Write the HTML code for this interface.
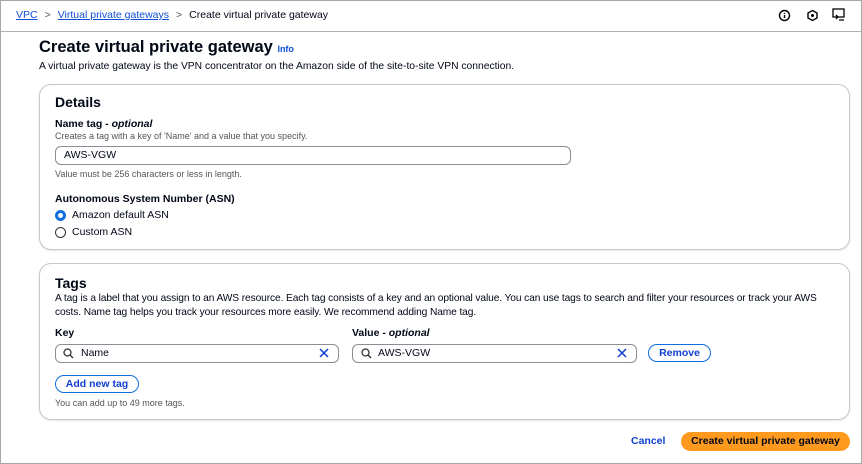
<!DOCTYPE html>
<html><head><style>
*{box-sizing:border-box;margin:0;padding:0}
body{width:862px;height:464px;background:#fff;font-family:"Liberation Sans",sans-serif;color:#000716;position:relative;overflow:hidden}
.frame{position:absolute;left:0;top:0;width:862px;height:464px;border:1px solid #a8a8a8}
.a{position:absolute;white-space:nowrap}
.hdr{position:absolute;left:0;top:0;width:862px;height:32px;border-bottom:1px solid #b0b0b0}
.lnk{color:#0f4fd6;text-decoration:underline}
.panel{position:absolute;left:39px;width:811px;border:1px solid #c6c6cd;border-radius:12px;box-shadow:0 1px 2px rgba(0,0,0,.1)}
.inp{position:absolute;height:19px;border:1px solid #8c8c94;border-radius:6px}
.s{font-size:9px;color:#555}
.b{font-weight:bold}
.btn{position:absolute;height:18px;border:1px solid #0f6ee0;border-radius:10px;color:#0f3fd0;font-weight:bold;font-size:10.5px;text-align:center;line-height:16px}
</style></head><body>
<div class="hdr"></div>
<div class="a" style="left:16px;top:9px;font-size:10.5px"><span class="lnk">VPC</span><span style="color:#555;margin:0 7px">&gt;</span><span class="lnk">Virtual private gateways</span><span style="color:#555;margin:0 7px">&gt;</span>Create virtual private gateway</div>
<svg class="a" style="left:778px;top:9px" width="13" height="13" viewBox="0 0 13 13"><circle cx="6.5" cy="6.5" r="5" fill="none" stroke="#000" stroke-width="1.4"/><path d="M6.5 4v1M6.5 6v3" stroke="#000" stroke-width="1.4"/></svg>
<svg class="a" style="left:806px;top:9px" width="13" height="13" viewBox="0 0 13 13"><path d="M6.5 1.5l4.5 2.5v5l-4.5 2.5-4.5-2.5v-5z" fill="none" stroke="#000" stroke-width="1.4"/><circle cx="6.5" cy="6.5" r="1.5" fill="#000"/></svg>
<svg class="a" style="left:832px;top:8px" width="14" height="14" viewBox="0 0 14 14"><rect x="1" y="1" width="11" height="8" fill="none" stroke="#000" stroke-width="1.3"/><path d="M4 7l2 2-2 2M7 12h5" fill="none" stroke="#000" stroke-width="1.3"/></svg>

<div class="a b" style="left:39px;top:38px;font-size:16.5px">Create virtual private gateway <span style="font-size:9px;color:#0f4fd6">Info</span></div>
<div class="a" style="left:39px;top:61px;font-size:10.3px">A virtual private gateway is the VPN concentrator on the Amazon side of the site-to-site VPN connection.</div>

<div class="panel" style="top:84px;height:166px"></div>
<div class="a b" style="left:55px;top:94px;font-size:14px">Details</div>
<div class="a b" style="left:55px;top:118px;font-size:10.5px">Name tag - <i>optional</i></div>
<div class="a s" style="left:55px;top:131px">Creates a tag with a key of 'Name' and a value that you specify.</div>
<div class="inp" style="left:55px;top:146px;width:516px"></div>
<div class="a" style="left:64px;top:149px;font-size:10.5px">AWS-VGW</div>
<div class="a s" style="left:55px;top:169px">Value must be 256 characters or less in length.</div>
<div class="a b" style="left:55px;top:193px;font-size:10.5px">Autonomous System Number (ASN)</div>
<div class="a" style="left:55px;top:210px;width:11px;height:11px;border-radius:50%;border:3.5px solid #0f6ee0"></div>
<div class="a" style="left:72px;top:209px;font-size:10.5px">Amazon default ASN</div>
<div class="a" style="left:55px;top:227px;width:11px;height:11px;border-radius:50%;border:1.3px solid #333"></div>
<div class="a" style="left:72px;top:226px;font-size:10.5px">Custom ASN</div>

<div class="panel" style="top:263px;height:157px"></div>
<div class="a b" style="left:55px;top:275px;font-size:14px">Tags</div>
<div class="a" style="left:55px;top:292px;font-size:10.2px;letter-spacing:-0.1px;line-height:14px">A tag is a label that you assign to an AWS resource. Each tag consists of a key and an optional value. You can use tags to search and filter your resources or track your AWS<br>costs. Name tag helps you track your resources more easily. We recommend adding Name tag.</div>
<div class="a b" style="left:55px;top:327px;font-size:10.5px">Key</div>
<div class="a b" style="left:352px;top:327px;font-size:10.5px">Value - <i>optional</i></div>
<div class="inp" style="left:55px;top:344px;width:284px"></div>
<div class="inp" style="left:352px;top:344px;width:285px"></div>
<svg class="a" style="left:63px;top:348px" width="11" height="11" viewBox="0 0 11 11"><circle cx="4.5" cy="4.5" r="3.5" fill="none" stroke="#333" stroke-width="1.3"/><path d="M7 7l3 3" stroke="#333" stroke-width="1.3"/></svg>
<svg class="a" style="left:361px;top:348px" width="11" height="11" viewBox="0 0 11 11"><circle cx="4.5" cy="4.5" r="3.5" fill="none" stroke="#333" stroke-width="1.3"/><path d="M7 7l3 3" stroke="#333" stroke-width="1.3"/></svg>
<div class="a" style="left:81px;top:347px;font-size:10.5px">Name</div>
<div class="a" style="left:378px;top:347px;font-size:10.5px">AWS-VGW</div>
<svg class="a" style="left:319px;top:348px" width="10" height="10" viewBox="0 0 10 10"><path d="M1 1l8 8M9 1l-8 8" stroke="#0f3fd0" stroke-width="1.5"/></svg>
<svg class="a" style="left:617px;top:348px" width="10" height="10" viewBox="0 0 10 10"><path d="M1 1l8 8M9 1l-8 8" stroke="#0f3fd0" stroke-width="1.5"/></svg>
<div class="btn" style="left:648px;top:344px;width:63px">Remove</div>
<div class="btn" style="left:55px;top:375px;width:84px">Add new tag</div>
<div class="a s" style="left:55px;top:398px">You can add up to 49 more tags.</div>

<div class="a b" style="left:631px;top:435px;font-size:10.5px;color:#0f3fd0">Cancel</div>
<div class="a b" style="left:681px;top:432px;width:169px;height:19px;border-radius:10px;background:#ff9a1f;font-size:10.5px;text-align:center;line-height:19px">Create virtual private gateway</div>
<div class="frame"></div>
</body></html>
